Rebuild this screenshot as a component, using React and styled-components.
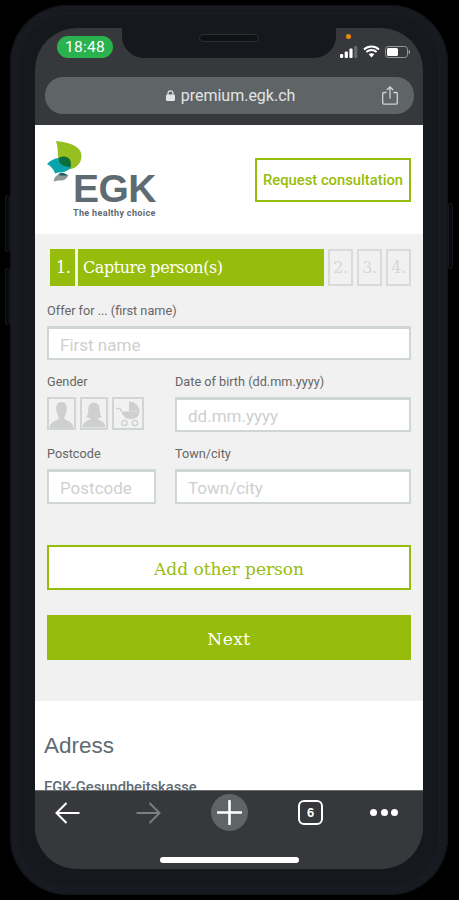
import React from 'react';
import styled, { createGlobalStyle } from 'styled-components';

const GlobalStyle = createGlobalStyle`
  html, body {
    margin: 0;
    padding: 0;
    background: #000;
  }
  * {
    box-sizing: border-box;
  }
`;

const SLAB = '"DejaVu Serif", "Liberation Serif", serif';
const SANS = 'Roboto, "Liberation Sans", sans-serif';
const GREEN = '#97bd0c';
const SLATE = '#5e6b73';

// Device
const Page = styled.div`
  width: 459px;
  height: 900px;
  padding: 5px 0 0 10px;
  background: #000;
  overflow: hidden;
`;

const Phone = styled.div`
  position: relative;
  width: 438px;
  height: 890px;
  padding: 23px 25px 26px;
  border-radius: 58px;
  background: #15181d;
  box-shadow: inset 0 0 0 1px #101216, inset 0 0 0 8px #171a20, inset 0 0 0 9px #1a1e24;
`;

const SideButton = styled.div`
  position: absolute;
  top: ${(p) => p.$top}px;
  ${(p) => (p.$right ? 'right: -5px;' : 'left: -5px;')}
  width: 5px;
  height: ${(p) => p.$height}px;
  border: 1px solid #14171b;
  border-radius: 2px;
  background: #08090a;
`;

const Screen = styled.div`
  position: relative;
  display: flex;
  flex-direction: column;
  width: 388px;
  height: 841px;
  border-radius: 42px;
  background: #36383b;
  overflow: hidden;
`;

const Notch = styled.div`
  position: absolute;
  top: 0;
  left: 87px;
  width: 214px;
  height: 30px;
  display: flex;
  justify-content: center;
  padding-top: 6px;
  border-radius: 0 0 22px 22px;
  background: #15181c;
`;

const Speaker = styled.div`
  width: 60px;
  height: 8px;
  border-radius: 4px;
  border: 1px solid #2b2f34;
  background: #0f1114;
`;

const CameraDot = styled.div`
  position: absolute;
  top: 6px;
  left: 311px;
  width: 5px;
  height: 5px;
  border-radius: 50%;
  background: #e8890c;
`;

// Status bar
const StatusBar = styled.div`
  display: flex;
  align-items: flex-start;
  justify-content: space-between;
  height: 49px;
  padding: 8px 13px 0 22px;
`;

const Clock = styled.div`
  width: 56px;
  height: 22px;
  border-radius: 11px;
  background: #2ab24f;
  color: #fff;
  font: 400 15.5px/22px ${SANS};
  letter-spacing: 0.3px;
  text-align: center;
`;

const StatusIcons = styled.div`
  display: flex;
  align-items: center;
  gap: 5px;
  margin-top: 9px;
`;

// Address bar
const UrlBar = styled.div`
  display: grid;
  grid-template-columns: 1fr auto 1fr;
  align-items: center;
  height: 37px;
  margin: 0 9px 11px 10px;
  padding: 0 16px 0 18px;
  border-radius: 18px;
  background: #5f6467;
`;

const UrlText = styled.div`
  grid-column: 2;
  display: flex;
  align-items: center;
  gap: 6px;
  color: #e2e4e5;
  font: 400 16px/20px ${SANS};
`;

const ShareSlot = styled.div`
  grid-column: 3;
  display: flex;
  justify-content: flex-end;
`;

// Site content
const Content = styled.div`
  flex: 1;
  min-height: 0;
  background: #fff;
  overflow: hidden;
`;

const Header = styled.div`
  display: flex;
  align-items: center;
  justify-content: space-between;
  height: 109px;
  padding: 0 12px 0 10px;
`;

const Logo = styled.div`
  display: flex;
  align-items: flex-start;
`;

const Leaves = styled.svg`
  display: block;
  flex: none;
  margin-right: -12px;
`;

const Wordmark = styled.div`
  display: flex;
  flex-direction: column;
  margin-top: 29px;
  color: ${SLATE};
`;

const WordmarkName = styled.span`
  font: 700 39px/39px "Liberation Sans", sans-serif;
  letter-spacing: -0.5px;
`;

const WordmarkClaim = styled.span`
  font: 700 9px/11px ${SANS};
  letter-spacing: 0.35px;
  white-space: nowrap;
`;

const ConsultButton = styled.button`
  width: 156px;
  height: 44px;
  padding: 0;
  border: 2px solid ${GREEN};
  background: #fff;
  color: ${GREEN};
  font: 500 14.8px/20px ${SANS};
`;

const FormPanel = styled.div`
  padding: 15px 12px 41px;
  background: #f1f1f1;
`;

const Steps = styled.div`
  display: flex;
  gap: 3px;
  height: 37px;
  margin: 0 0 17px 3px;
`;

const StepActive = styled.div`
  flex: ${(p) => (p.$grow ? 1 : 'none')};
  width: ${(p) => p.$width}px;
  padding-left: ${(p) => p.$pad}px;
  background: ${GREEN};
  color: #fff;
  font: 400 16px/37px ${SLAB};
  letter-spacing: -0.45px;
`;

const StepIdle = styled.div`
  flex: none;
  width: 25px;
  margin-left: 1px;
  border: 2px solid #dadada;
  color: #d6d6d6;
  font: 400 16px/33px ${SLAB};
  letter-spacing: -0.45px;
  text-align: center;
`;

const Fields = styled.div`
  display: grid;
  grid-template-columns: 109px 236px;
  column-gap: 19px;
  row-gap: 14px;
`;

const Field = styled.div`
  grid-column: ${(p) => (p.$wide ? '1 / -1' : 'auto')};
  display: flex;
  flex-direction: column;
  gap: 7px;
`;

const Label = styled.label`
  color: #666;
  font: 400 12.7px/16px ${SANS};
`;

const Input = styled.input`
  width: 100%;
  height: ${(p) => p.$height || 35}px;
  padding: 2px 0 0 11px;
  border: 2px solid #d0d5d6;
  border-top-width: 3px;
  border-radius: 0;
  background: #fff;
  font: 400 17px/20px ${SANS};
  outline: none;

  &::placeholder {
    color: #cfcfcf;
    opacity: 1;
  }
`;

const GenderRow = styled.div`
  display: flex;
  gap: 4px;
`;

const GenderBox = styled.div`
  display: flex;
  align-items: flex-end;
  justify-content: center;
  width: ${(p) => p.$width}px;
  height: 33px;
  border: 2px solid #d0d5d6;
  background: #f1f1f1;
`;

const OutlineButton = styled.button`
  display: block;
  width: 100%;
  height: 45px;
  margin-top: 41px;
  padding: 3px 0 0;
  border: 2px solid ${GREEN};
  background: #fff;
  color: ${GREEN};
  font: 400 17px/20px ${SLAB};
`;

const SolidButton = styled.button`
  display: block;
  width: 100%;
  height: 45px;
  margin-top: 25px;
  padding: 3px 0 0;
  border: none;
  background: ${GREEN};
  color: #fff;
  font: 400 17px/20px ${SLAB};
  letter-spacing: 0.5px;
`;

const AddressBlock = styled.div`
  padding: 32px 9px 0;
`;

const AddressTitle = styled.h2`
  margin: 0 0 19px;
  color: ${SLATE};
  font: 400 22.5px/26px "Liberation Sans", sans-serif;
`;

const AddressName = styled.div`
  color: ${SLATE};
  font: 500 14.7px/18px ${SANS};
`;

// Browser toolbar
const Toolbar = styled.div`
  flex: none;
  height: 79px;
  border-top: 1px solid #6a6c6e;
  background: #36383b;
`;

const ToolRow = styled.div`
  display: grid;
  grid-template-columns: repeat(4, 25px) 28px;
  column-gap: 56px;
  align-items: center;
  height: 43px;
  padding-left: 20px;
`;

const ToolIcon = styled.div`
  display: flex;
  align-items: center;
  justify-content: center;
`;

const PlusCircle = styled.div`
  justify-self: center;
  flex: none;
  display: flex;
  align-items: center;
  justify-content: center;
  width: 37px;
  height: 37px;
  border-radius: 50%;
  background: #5f6467;
`;

const TabCount = styled.div`
  width: 25px;
  height: 25px;
  border: 2px solid #fff;
  border-radius: 6px;
  color: #fff;
  font: 700 13px/21px "Liberation Sans", sans-serif;
  text-align: center;
`;

const Dots = styled.div`
  display: flex;
  justify-content: space-between;
  justify-self: start;
  width: 28px;
  margin-left: -9px;
`;

const Dot = styled.span`
  width: 7px;
  height: 7px;
  border-radius: 50%;
  background: #fff;
`;

const HomeBar = styled.div`
  width: 139px;
  height: 6px;
  margin: 23px auto 0;
  border-radius: 3px;
  background: #fff;
`;

function LeafMark() {
  return (
    <Leaves width="40" height="44" viewBox="45 140 40 44">
      <path d="M56 141C66 142 77 144.500 80.500 151.500C83 157.500 80.500 165 74 168C68 170.500 60.500 169.500 58.500 162C57.500 155.500 58.500 148.500 56 141Z" fill="#96bf1f" />
      <path d="M47 164C50 161 54 158.500 58 158C63 157.500 68 161 71 167.500C68 171 64 172.500 60 172.500C58 172.500 56.500 173 55 173.500C54 170 51 166 47 164Z" fill="#0aa3ac" />
      <path d="M59 158C61.500 156 65 156 67.500 157.500C71 159.500 71.500 163.500 70.500 167.500C66 166.500 61 165.500 59 161.500Z" fill="#0c6f37" />
      <path d="M53.500 181.500C54 178 56 175.500 58.500 174.500C62 173.500 66 174.500 68.500 175.500C67 178.500 64.500 180.500 60.500 180.500C58 180.500 55.500 181 53.500 181.500Z" fill="#8f9a93" />
      <path d="M58 174.500C60 172.500 63 172 68 175C65 176 61 176 58 174.500Z" fill="#1d5f62" />
    </Leaves>
  );
}

function PersonIcon({ long }) {
  return (
    <svg width="25" height="27" viewBox="0 0 25 27" style={{ display: 'block' }}>
      {long ? (
        <path d="M12.500 1C17 1 18.500 5 18.500 9C18.500 12 19.500 14.500 20.500 16C18.500 17 16.500 17.500 15.500 18C18.500 20 24 20.500 24.500 27H0.500C1 20.500 6.500 20 9.500 18C8.500 17.500 6.500 17 4.500 16C5.500 14.500 6.500 12 6.500 9C6.500 5 8 1 12.500 1Z" fill="#cfcfcf" />
      ) : (
        <path d="M12.500 1C16.500 1 18 4 17.800 8C17.600 11.500 16.500 14 15.500 15.500V18C18 20 24 20.500 24.500 27H0.500C1 20.500 7 20 9.500 18V15.500C8.500 14 7.400 11.500 7.200 8C7 4 8.500 1 12.500 1Z" fill="#cfcfcf" />
      )}
    </svg>
  );
}

function PramIcon() {
  return (
    <svg width="26" height="27" viewBox="0 0 26 27" style={{ display: 'block', marginBottom: 1 }}>
      <path d="M14 1.500C20 1.500 24.500 6 24.500 11.500H14Z" fill="#cfcfcf" />
      <path d="M6.500 11.500H24.500C24.500 16.500 20.500 19 15.500 19C11 19 7.500 16.500 6.500 11.500Z" fill="#cfcfcf" />
      <path d="M1 8.500H4C5.500 8.500 6 10 6.500 11.500" fill="none" stroke="#cfcfcf" strokeWidth="1.400" />
      <circle cx="9.500" cy="23" r="2.600" fill="none" stroke="#cfcfcf" strokeWidth="1.300" />
      <circle cx="20" cy="23" r="2.600" fill="none" stroke="#cfcfcf" strokeWidth="1.300" />
    </svg>
  );
}

function SignalIcon() {
  return (
    <svg width="18" height="12" viewBox="0 0 18 12" style={{ display: 'block' }}>
      <rect x="0" y="8" width="3.200" height="4" rx="1" fill="#fff" />
      <rect x="4.700" y="5.500" width="3.200" height="6.500" rx="1" fill="#fff" />
      <rect x="9.400" y="2.500" width="3.200" height="9.500" rx="1" fill="#fff" />
      <rect x="14.100" y="0" width="3.200" height="12" rx="1" fill="#66686b" />
    </svg>
  );
}

function WifiIcon() {
  return (
    <svg width="17" height="13" viewBox="0 0 17 13" style={{ display: 'block' }}>
      <path d="M1 4.500C5.200 0.500 11.800 0.500 16 4.500M3.400 7C6.200 4.300 10.800 4.300 13.600 7" fill="none" stroke="#fff" strokeWidth="1.900" />
      <path d="M5.700 9.300C7.200 7.900 9.800 7.900 11.300 9.300L8.500 12.500Z" fill="#fff" />
    </svg>
  );
}

function BatteryIcon() {
  return (
    <svg width="25" height="12" viewBox="0 0 25 12" style={{ display: 'block' }}>
      <rect x="0.500" y="0.500" width="22" height="11" rx="3" fill="none" stroke="#96989a" />
      <rect x="2" y="2" width="11" height="8" rx="1.500" fill="#fff" />
      <rect x="23.600" y="4" width="1.400" height="4" rx="0.700" fill="#96989a" />
    </svg>
  );
}

function LockIcon() {
  return (
    <svg width="9" height="11" viewBox="0 0 9 11" style={{ display: 'block' }}>
      <path d="M2 5V3.200C2 1.800 3 0.800 4.500 0.800C6 0.800 7 1.800 7 3.200V5" fill="none" stroke="#e2e4e5" strokeWidth="1.200" />
      <rect x="0" y="4.500" width="9" height="6.500" rx="1.300" fill="#e2e4e5" />
    </svg>
  );
}

function ShareIcon() {
  return (
    <svg width="16" height="19" viewBox="0 0 16 19" style={{ display: 'block' }}>
      <path d="M4.500 6.500H1.800C1.100 6.500 0.700 7 0.700 7.600V17C0.700 17.600 1.100 18.100 1.800 18.100H14.200C14.900 18.100 15.300 17.600 15.300 17V7.600C15.300 7 14.900 6.500 14.200 6.500H11.500" fill="none" stroke="#d3d5d6" strokeWidth="1.300" />
      <path d="M8 12.500V1M4.800 4L8 0.900L11.200 4" fill="none" stroke="#d3d5d6" strokeWidth="1.300" />
    </svg>
  );
}

function ArrowIcon({ back, color }) {
  return (
    <svg width="25" height="22" viewBox="0 0 25 22" style={{ display: 'block', transform: back ? 'none' : 'scaleX(-1)' }}>
      <path d="M24.500 11H1.500M11.500 1L1.500 11L11.500 21" fill="none" stroke={color} strokeWidth="2" />
    </svg>
  );
}

function PlusIcon() {
  return (
    <svg width="25" height="25" viewBox="0 0 25 25" style={{ display: 'block' }}>
      <path d="M12.500 1V24M1 12.500H24" fill="none" stroke="#fff" strokeWidth="2.600" strokeLinecap="round" />
    </svg>
  );
}

export default function App() {
  return (
    <Page>
      <GlobalStyle />
      <Phone>
        <SideButton $top={190} $height={57} />
        <SideButton $top={263} $height={57} />
        <SideButton $right $top={198} $height={66} />
        <Screen>
          <Notch>
            <Speaker />
          </Notch>
          <CameraDot />
          <StatusBar>
            <Clock>18:48</Clock>
            <StatusIcons>
              <SignalIcon />
              <WifiIcon />
              <BatteryIcon />
            </StatusIcons>
          </StatusBar>

          <UrlBar>
            <UrlText>
              <LockIcon />
              premium.egk.ch
            </UrlText>
            <ShareSlot>
              <ShareIcon />
            </ShareSlot>
          </UrlBar>

          <Content>
            <Header>
              <Logo>
                <LeafMark />
                <Wordmark>
                  <WordmarkName>EGK</WordmarkName>
                  <WordmarkClaim>The healthy choice</WordmarkClaim>
                </Wordmark>
              </Logo>
              <ConsultButton>Request consultation</ConsultButton>
            </Header>

            <FormPanel>
              <Steps>
                <StepActive $width={25} $pad={6}>1.</StepActive>
                <StepActive $grow $pad={5}>Capture person(s)</StepActive>
                <StepIdle>2.</StepIdle>
                <StepIdle>3.</StepIdle>
                <StepIdle>4.</StepIdle>
              </Steps>

              <Fields>
                <Field $wide>
                  <Label>Offer for ... (first name)</Label>
                  <Input $height={34} placeholder="First name" />
                </Field>
                <Field>
                  <Label>Gender</Label>
                  <GenderRow>
                    <GenderBox $width={29}><PersonIcon /></GenderBox>
                    <GenderBox $width={28}><PersonIcon long /></GenderBox>
                    <GenderBox $width={32}><PramIcon /></GenderBox>
                  </GenderRow>
                </Field>
                <Field>
                  <Label>Date of birth (dd.mm.yyyy)</Label>
                  <Input placeholder="dd.mm.yyyy" />
                </Field>
                <Field>
                  <Label>Postcode</Label>
                  <Input placeholder="Postcode" />
                </Field>
                <Field>
                  <Label>Town/city</Label>
                  <Input placeholder="Town/city" />
                </Field>
              </Fields>

              <OutlineButton>Add other person</OutlineButton>
              <SolidButton>Next</SolidButton>
            </FormPanel>

            <AddressBlock>
              <AddressTitle>Adress</AddressTitle>
              <AddressName>EGK-Gesundheitskasse</AddressName>
            </AddressBlock>
          </Content>

          <Toolbar>
            <ToolRow>
              <ToolIcon><ArrowIcon back color="#fff" /></ToolIcon>
              <ToolIcon><ArrowIcon color="#7b7d7f" /></ToolIcon>
              <PlusCircle><PlusIcon /></PlusCircle>
              <TabCount>6</TabCount>
              <Dots>
                <Dot />
                <Dot />
                <Dot />
              </Dots>
            </ToolRow>
            <HomeBar />
          </Toolbar>
        </Screen>
      </Phone>
    </Page>
  );
}
